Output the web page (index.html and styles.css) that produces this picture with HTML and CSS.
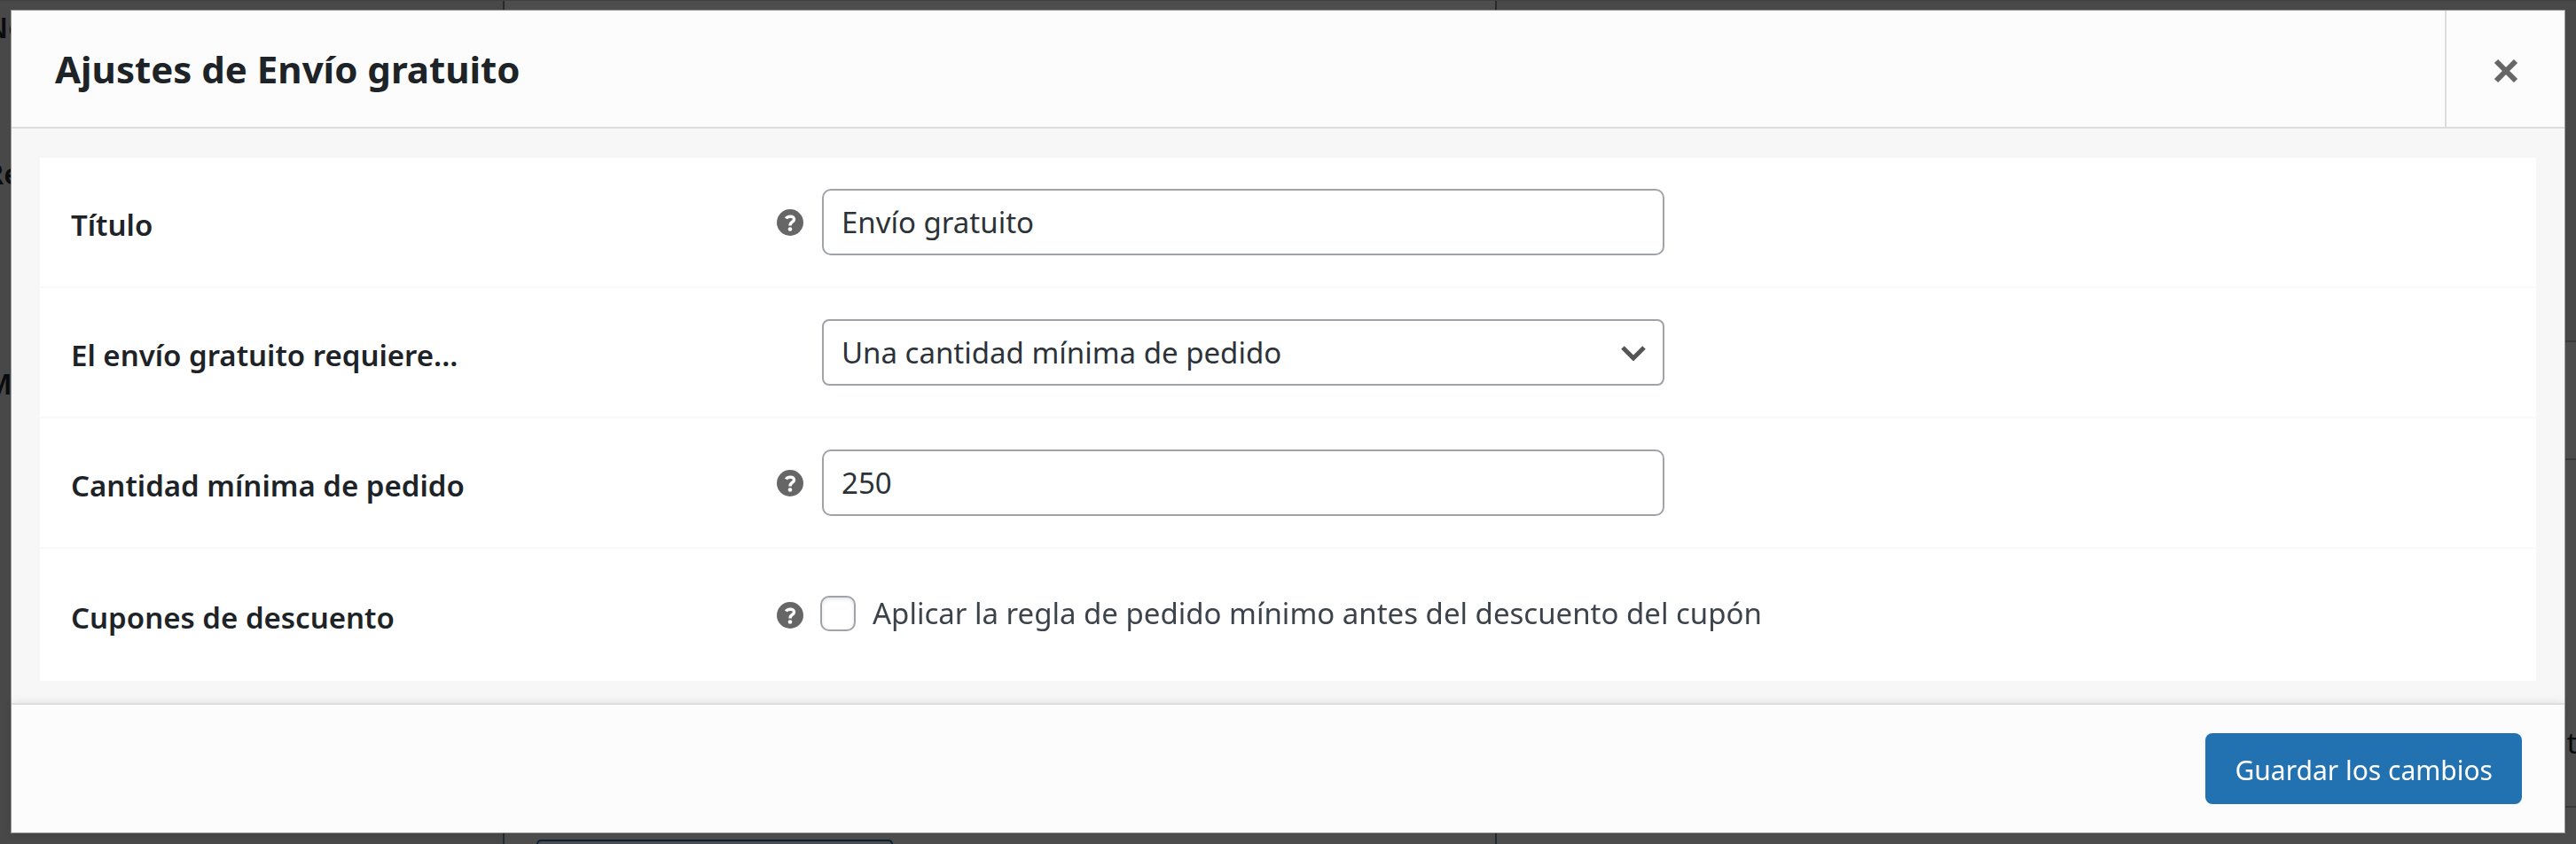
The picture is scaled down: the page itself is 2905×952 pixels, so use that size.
FILE: index.html
```html
<!DOCTYPE html>
<html lang="es">
  <head>
    <meta charset="UTF-8" />
    <meta name="viewport" content="width=device-width, initial-scale=1.0" />
    <title>Ajustes de Envío gratuito</title>
    <link rel="stylesheet" href="styles.css" />
  </head>
  <body>
    <!-- Page behind the modal -->
    <div class="page" aria-hidden="true">
      <div class="page-labels">
        <span class="page-name">No</span>
        <span class="page-region">Re</span>
        <span class="page-methods">M</span>
      </div>
      <div class="page-column">
        <div class="page-add"></div>
      </div>
      <div class="page-side">
        <div class="side-head"></div>
        <div class="side-row"></div>
        <div class="side-text">te</div>
        <div class="side-end"></div>
      </div>
    </div>

    <div class="backdrop">
      <form class="modal" role="dialog" aria-labelledby="modalTitle">
        <header class="modal-header">
          <h1 id="modalTitle">Ajustes de Envío gratuito</h1>
          <button type="button" class="close" aria-label="Cerrar">
            <svg viewBox="0 0 28 28" width="28" height="28">
              <path d="M3 3 25 25M25 3 3 25" fill="none" stroke="#666" stroke-width="6" />
            </svg>
          </button>
        </header>

        <div class="modal-body">
          <div class="settings">
            <div class="row">
              <div class="row-head">
                <label for="title">Título</label>
                <span class="help">
                  <svg viewBox="0 0 30 30" width="30" height="30">
                    <circle cx="15" cy="15" r="15" fill="#666" />
                    <path d="M10.500 10.500C11.500 8 19.500 6.500 19.500 11.500C19.500 14.500 15 14 15 18.500" fill="none" stroke="#fff" stroke-width="3.400" />
                    <circle cx="15" cy="22.500" r="2.300" fill="#fff" />
                  </svg>
                </span>
              </div>
              <input type="text" id="title" class="field" value="Envío gratuito" />
            </div>

            <div class="row">
              <div class="row-head">
                <label for="requires">El envío gratuito requiere...</label>
              </div>
              <div class="select-wrap">
                <select id="requires" class="field">
                  <option>Una cantidad mínima de pedido</option>
                </select>
                <svg class="arrow" viewBox="0 0 28 17" width="28" height="17">
                  <path d="M2 2 14 14 26 2" fill="none" stroke="#555" stroke-width="5" />
                </svg>
              </div>
            </div>

            <div class="row">
              <div class="row-head">
                <label for="amount">Cantidad mínima de pedido</label>
                <span class="help">
                  <svg viewBox="0 0 30 30" width="30" height="30">
                    <circle cx="15" cy="15" r="15" fill="#666" />
                    <path d="M10.500 10.500C11.500 8 19.500 6.500 19.500 11.500C19.500 14.500 15 14 15 18.500" fill="none" stroke="#fff" stroke-width="3.400" />
                    <circle cx="15" cy="22.500" r="2.300" fill="#fff" />
                  </svg>
                </span>
              </div>
              <input type="text" id="amount" class="field" value="250" />
            </div>

            <div class="row">
              <div class="row-head">
                <label for="coupons">Cupones de descuento</label>
                <span class="help">
                  <svg viewBox="0 0 30 30" width="30" height="30">
                    <circle cx="15" cy="15" r="15" fill="#666" />
                    <path d="M10.500 10.500C11.500 8 19.500 6.500 19.500 11.500C19.500 14.500 15 14 15 18.500" fill="none" stroke="#fff" stroke-width="3.400" />
                    <circle cx="15" cy="22.500" r="2.300" fill="#fff" />
                  </svg>
                </span>
              </div>
              <label class="check">
                <input type="checkbox" id="coupons" />
                Aplicar la regla de pedido mínimo antes del descuento del cupón
              </label>
            </div>
          </div>
        </div>

        <footer class="modal-footer">
          <button type="submit" class="save">Guardar los cambios</button>
        </footer>
      </form>
    </div>
  </body>
</html>
```

FILE: styles.css
```css
* {
  box-sizing: border-box;
}

body {
  margin: 0;
  height: 100vh;
  overflow: hidden;
  font-family: "Noto Sans", "Open Sans", sans-serif;
  font-size: 33px;
  line-height: 40px;
  color: #3c434a;
  background-color: #484848;
}

/* dimmed page */
.page {
  display: grid;
  grid-template-columns: 567px 1121px 1fr;
  height: 100%;
  border-top: 1px solid #404040;
  color: #090b0d;
}

.page-labels {
  display: flex;
  flex-direction: column;
  margin-left: -17px;
  font-weight: 600;
}

.page-name {
  margin-top: 10px;
}

.page-region {
  margin-top: 125px;
}

.page-methods {
  margin-top: 197px;
}

.page-column {
  display: flex;
  flex-direction: column;
  justify-content: flex-end;
  padding-left: 36px;
  border-left: 2px solid #252a2f;
  border-right: 2px solid #252a2f;
  background-color: #4d4d4d;
}

.page-add {
  width: 402px;
  height: 5px;
  border: 2px solid #0a2236;
  border-bottom: none;
  border-radius: 5px 5px 0 0;
}

.page-side {
  display: flex;
  flex-direction: column;
  background-color: #4d4d4d;
}

.side-head {
  height: 385px;
  background-color: #484848;
  border-bottom: 2px solid #3a3a3a;
}

.side-row {
  height: 133px;
  border-bottom: 2px solid #3a3a3a;
}

.side-text {
  height: 392px;
  padding-top: 299px;
  border-bottom: 2px solid #3a3a3a;
  text-align: right;
  margin-right: -20px;
}

.side-end {
  flex: 1;
}

/* modal */
.backdrop {
  position: fixed;
  inset: 0;
  display: flex;
  padding: 11px 12px 12px;
}

.modal {
  flex: 1;
  display: flex;
  flex-direction: column;
  background-color: #f7f7f7;
  border: 1px solid #999;
}

.modal-header {
  display: flex;
  justify-content: space-between;
  background-color: #fcfcfc;
  border-bottom: 2px solid #ddd;
}

h1 {
  margin: 0;
  padding: 34px 49px 33px;
  font-size: 42px;
  line-height: 64px;
  font-weight: 700;
  color: #1d2327;
}

button {
  font-family: inherit;
  cursor: pointer;
}

.close {
  display: flex;
  align-items: center;
  justify-content: center;
  width: 135px;
  padding: 4px 0 0;
  border: none;
  border-left: 2px solid #ddd;
  background: none;
}

.modal-body {
  flex: 1;
  padding: 33px 32px 24px;
}

.settings {
  background-color: #fff;
}

.row {
  display: grid;
  grid-template-columns: 826px 1fr;
  column-gap: 21px;
  align-items: center;
  min-height: 147px;
  padding: 34px 35px;
  border-bottom: 2px solid #f9f9f9;
}

.row:last-child {
  min-height: 149px;
  border-bottom: none;
}

.row-head {
  display: flex;
  align-items: center;
  justify-content: space-between;
  font-weight: 600;
  color: #1d2327;
}

.row-head label {
  padding-top: 6px;
}

.help {
  display: flex;
}

.field {
  width: 100%;
  max-width: 950px;
  height: 75px;
  padding: 0 20px;
  border: 2px solid #a0a3a7;
  border-radius: 10px;
  font: inherit;
  color: #2c3338;
  background-color: #fff;
}

.select-wrap {
  position: relative;
  max-width: 950px;
}

select.field {
  display: block;
  appearance: none;
  border-radius: 8px;
}

/* drop-down arrow over the select */
.arrow {
  position: absolute;
  top: 30px;
  right: 21px;
  pointer-events: none;
}

.check {
  display: flex;
  align-items: center;
  gap: 19px;
  padding-bottom: 4px;
}

.check input {
  appearance: none;
  width: 40px;
  height: 40px;
  margin: 0 0 0 -2px;
  border: 2px solid #a0a3a7;
  border-radius: 10px;
  background-color: #fff;
  box-shadow: inset 0 2px 4px rgba(0, 0, 0, 0.1);
}

.modal-footer {
  display: flex;
  justify-content: flex-end;
  padding: 32px 48px;
  background-color: #fcfcfc;
  border-top: 2px solid #ddd;
  box-shadow: 0 0 10px rgba(0, 0, 0, 0.1);
}

.save {
  height: 80px;
  padding: 2px 33px 0;
  border: none;
  border-radius: 8px;
  font-size: 30px;
  color: #fff;
  background-color: #2271b1;
}
```
